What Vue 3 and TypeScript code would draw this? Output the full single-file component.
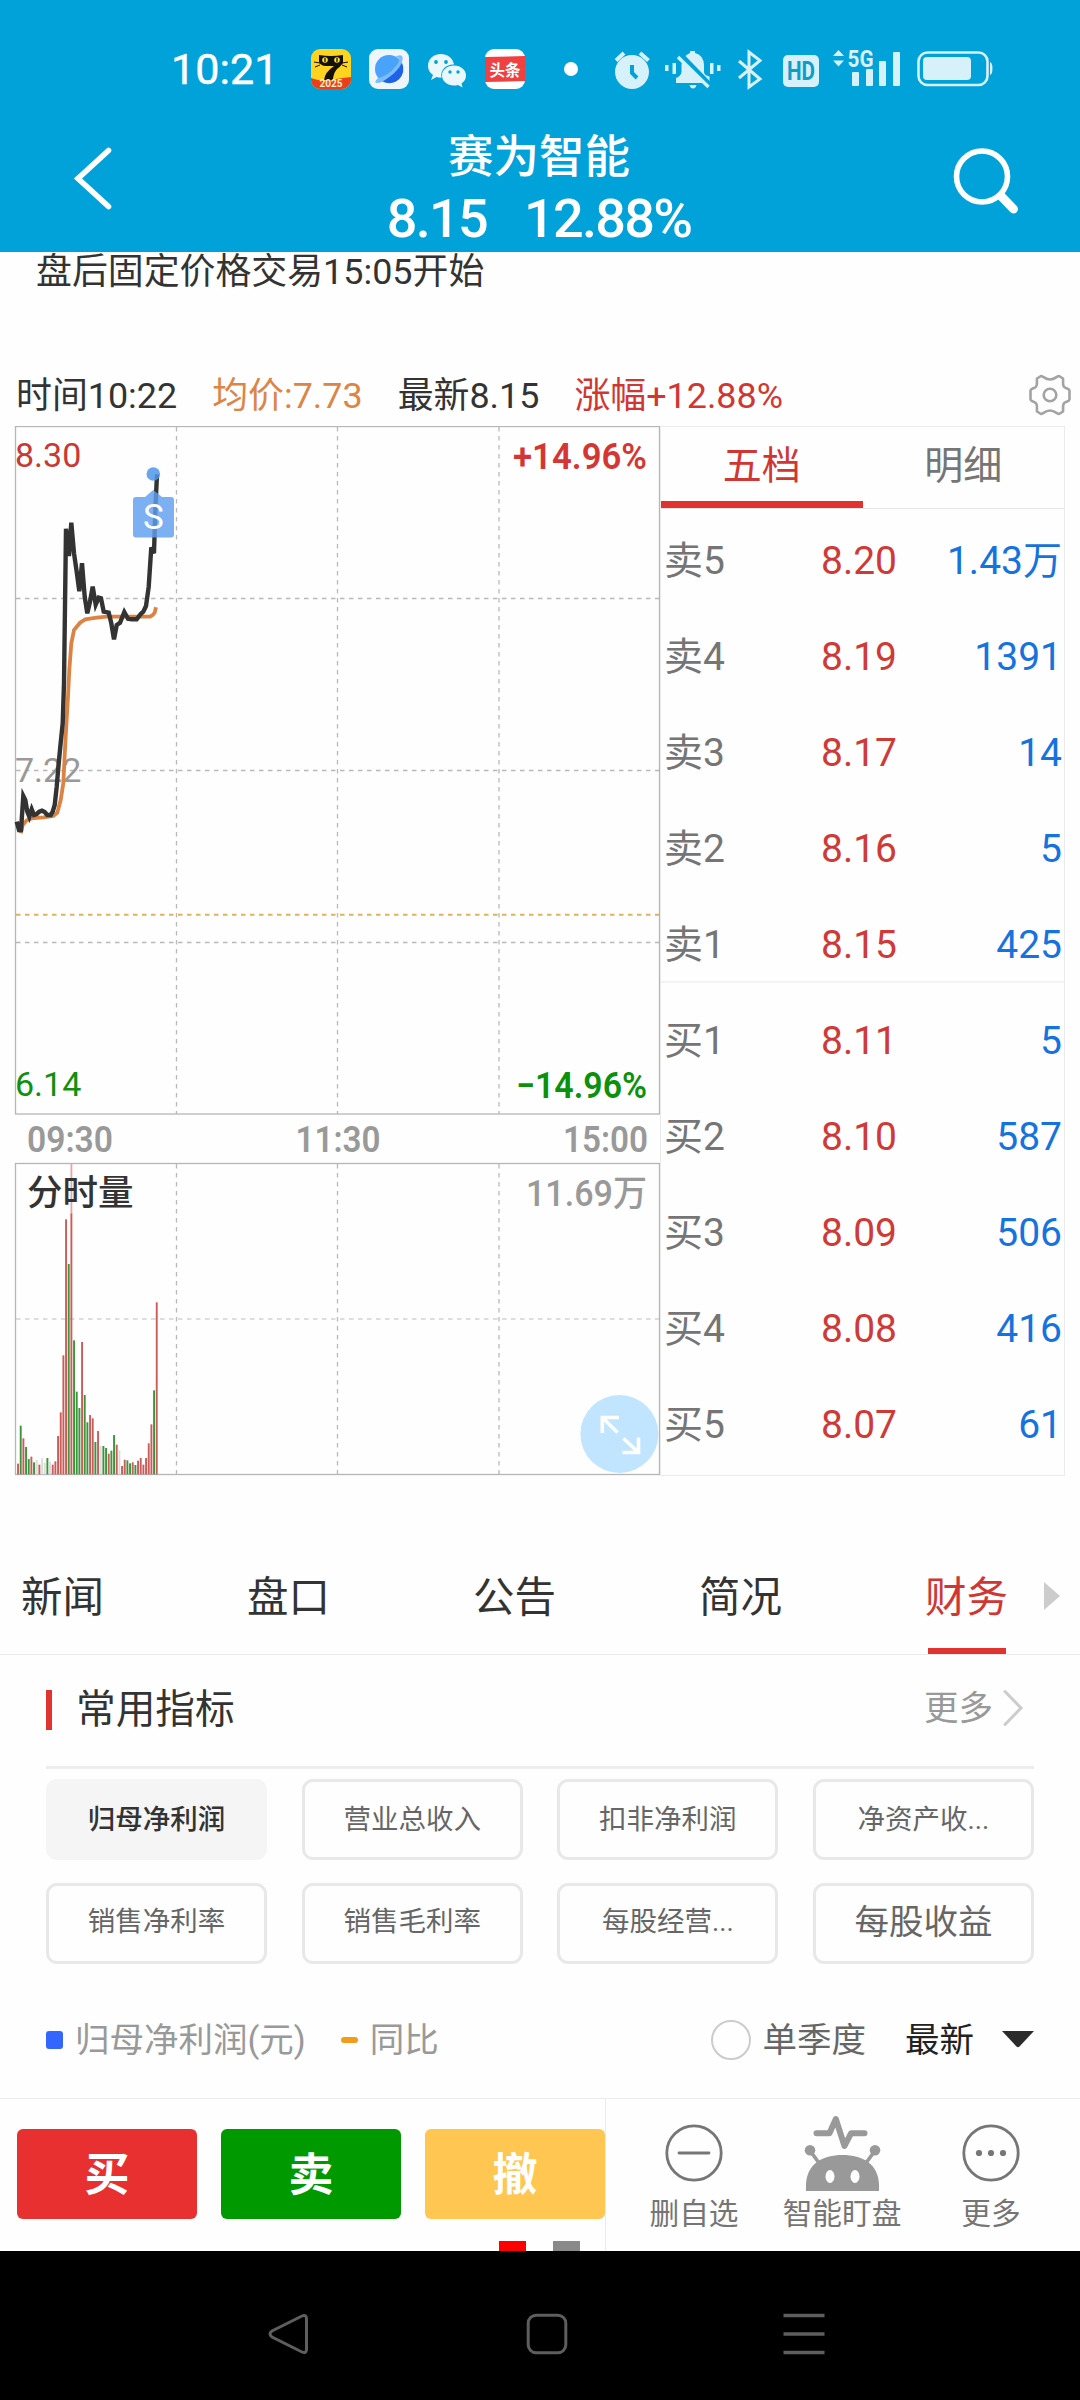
<script setup lang="ts">
type Level = { label: string; price: string; volume: string }
type Tone = 'r' | 'g' | 'n'

const sells: Level[] = [
  { label: '卖5', price: '8.20', volume: '1.43万' },
  { label: '卖4', price: '8.19', volume: '1391' },
  { label: '卖3', price: '8.17', volume: '14' },
  { label: '卖2', price: '8.16', volume: '5' },
  { label: '卖1', price: '8.15', volume: '425' },
]
const buys: Level[] = [
  { label: '买1', price: '8.11', volume: '5' },
  { label: '买2', price: '8.10', volume: '587' },
  { label: '买3', price: '8.09', volume: '506' },
  { label: '买4', price: '8.08', volume: '416' },
  { label: '买5', price: '8.07', volume: '61' },
]

const tabs: string[] = ['新闻', '盘口', '公告', '简况', '财务']
const activeTab = '财务'

const chips: { text: string; kind?: string }[] = [
  { text: '归母净利润', kind: 'on' },
  { text: '营业总收入' },
  { text: '扣非净利润' },
  { text: '净资产收...' },
  { text: '销售净利率' },
  { text: '销售毛利率' },
  { text: '每股经营...' },
  { text: '每股收益', kind: 'big' },
]

// Series below are in thirds of a pixel.
const scale = (pts: number[][]): string =>
  pts.map(([x, y]) => `${(x / 3).toFixed(1)},${(350 + y / 3).toFixed(1)}`).join(' ')

const priceLine = scale([
  [50, 1415], [57, 1440], [63, 1440], [70, 1338], [76, 1350], [82, 1385], [88, 1400], [95, 1378],
  [102, 1395], [110, 1392], [118, 1385], [126, 1382], [134, 1386], [142, 1395], [152, 1395],
  [158, 1385], [164, 1365], [170, 1310], [176, 1240], [181, 1190], [188, 1120], [192, 1000],
  [198, 536], [207, 618], [214, 518], [222, 610], [230, 665], [238, 724], [246, 640], [254, 740],
  [262, 790], [270, 755], [278, 710], [287, 764], [296, 743], [303, 745], [311, 785], [326, 788],
  [334, 820], [342, 868], [350, 825], [360, 818], [373, 786], [384, 806], [395, 808], [410, 808],
  [422, 792], [430, 785], [438, 768], [446, 710], [454, 592], [462, 610], [466, 480], [471, 373],
])
const averageLine = scale([
  [62, 1450], [68, 1425], [80, 1411], [100, 1404], [130, 1402], [160, 1398], [172, 1388],
  [182, 1350], [190, 1300], [196, 1180], [204, 1040], [208, 960], [214, 880], [222, 840],
  [240, 818], [256, 808], [290, 803], [320, 800], [450, 800], [458, 795], [464, 788], [468, 772],
])

const volumeTops: [number, Tone][] = [
  [1271, 'r'], [1157, 'g'], [1195, 'r'], [1221, 'g'], [1257, 'g'], [1250, 'r'], [1267, 'g'],
  [1260, 'n'], [1274, 'r'], [1255, 'n'], [1268, 'n'], [1254, 'g'], [1265, 'n'], [1274, 'r'],
  [1264, 'r'], [1188, 'r'], [1117, 'r'], [946, 'r'], [538, 'r'], [672, 'g'], [520, 'r'],
  [901, 'g'], [1055, 'g'], [1104, 'g'], [906, 'r'], [1065, 'g'], [1147, 'g'], [1125, 'r'],
  [1135, 'r'], [1206, 'g'], [1173, 'r'], [1218, 'n'], [1218, 'g'], [1224, 'g'], [1241, 'r'],
  [1232, 'g'], [1185, 'g'], [1214, 'r'], [1231, 'n'], [1278, 'r'], [1259, 'r'], [1261, 'g'],
  [1270, 'g'], [1267, 'r'], [1275, 'g'], [1262, 'r'], [1254, 'r'], [1274, 'r'], [1254, 'r'],
  [1210, 'r'], [1153, 'r'], [1051, 'g'], [787, 'r'],
]
const fills: Record<Tone, string> = { r: '#cc5c5a', g: '#3a953c', n: '#dcdcdc' }
const bars = volumeTops.map(([top, tone], i) => ({
  x: 17.1 + i * 2.667,
  y: 1040 + top / 3,
  h: (1303 - top) / 3,
  fill: fills[tone],
}))
</script>

<template>
  <div class="screen">
    <header class="head">
      <div class="status">
        <span class="clock">10:21</span>
        <svg width="40" height="40" viewBox="0 0 40 40">
          <rect width="40" height="40" rx="9" fill="#ffd31f" />
          <path d="M0 29 Q10 33 20 31 T40 28 V31 a9 9 0 0 1 -9 9 H9 a9 9 0 0 1 -9 -9Z" fill="#e8401d" />
          <path d="M8 6 Q20 8 32 6 V14 Q29 18 26 20 Q22 25 22 31 H13 Q14 23 23 17 H14 Q9 16 8 13Z" fill="#15110a" />
          <circle cx="14" cy="11" r="2.8" fill="#ffe23d" /><circle cx="26" cy="11" r="2.8" fill="#ffe23d" />
          <path d="M14 9v4M26 9v4" stroke="#15110a" stroke-width="1.3" />
          <path d="M3 13l6 1M4 18l5-2M37 13l-6 1M36 18l-5-2" stroke="#15110a" stroke-width="1" />
          <text x="20" y="37.500" font-size="10" font-weight="700" text-anchor="middle" fill="#fff0c8">2025</text>
        </svg>
        <svg class="g18" width="40" height="40" viewBox="0 0 40 40">
          <rect width="40" height="40" rx="9" fill="#eff5fb" />
          <circle cx="20" cy="20" r="14" fill="#4aa3fa" />
          <path d="M33 14 A14 14 0 0 1 13 32 Q28 25 33 14Z" fill="#1f62e8" />
          <path d="M9 29 Q4 34 8 34 Q14 34 25 24 Q36 12 33 7 Q31 5 26 8 Q34 8 27 17 Q19 27 9 29Z" fill="#79bdfb" />
        </svg>
        <svg class="g17" width="42" height="40" viewBox="0 0 42 40">
          <path d="M15 5 C7 5 2 10 2 17 c0 4 2 7 5 9 l-2 5 5.500-3 q2 .8 5 .8 C14 20 21 15 28 15.500 C27 9 21 5 15 5Z" fill="#e9f8fd" />
          <path d="M28 16.500 c-7 0-12 4.500-12 10 s5 10 12 10 q2 0 4-.6 l4.500 2.500 -1-4 c3-2 4.500-5 4.500-8 c0-5.500-5-10-12-10Z" fill="#e9f8fd" />
          <g fill="#01a1da"><circle cx="10" cy="13" r="1.900" /><circle cx="20" cy="13" r="1.900" /><circle cx="24" cy="23" r="1.700" /><circle cx="32" cy="23" r="1.700" /></g>
        </svg>
        <svg class="g17" width="40" height="40" viewBox="0 0 40 40">
          <rect width="40" height="40" rx="9" fill="#fff" />
          <path d="M0 8 L40 7 V32 L0 33Z" fill="#f04142" />
          <text x="20" y="26.500" font-size="15.500" font-weight="700" text-anchor="middle" fill="#fff">头条</text>
        </svg>
        <svg class="g39" width="14" height="14" viewBox="0 0 14 14"><circle cx="7" cy="7" r="7" fill="#fff" /></svg>
        <svg class="system" width="384" height="60" viewBox="612 39 384 60" fill="#d6f1fa">
          <circle cx="632" cy="72" r="17" />
          <path d="M616 60.500 L624 53 M640 53 L648.500 60.500" stroke="#d6f1fa" stroke-width="4" />
          <path d="M632 65 V73 L637 78" fill="none" stroke="#01a1da" stroke-width="4" />
          <path d="M690 51 h5 v2 q8.500 2 9 12 v7 q0 3 5.500 4.500 V83 H676 v-5 q5-2 5.500-6 v-7 q.5-9 8.500-12Z" />
          <path d="M689.500 85 h7 q-1 3.500-3.500 3.500 t-3.500-3.500Z" />
          <path d="M681 55 L712 87" stroke="#01a1da" stroke-width="5" />
          <path d="M678 57 L708.500 87" stroke="#d6f1fa" stroke-width="3.400" />
          <rect x="665" y="65" width="3.500" height="6" /><rect x="672.500" y="63" width="3.500" height="11" />
          <rect x="710" y="63" width="3.500" height="11" /><rect x="717" y="65" width="3.500" height="6" />
          <path d="M739 61 L760 79 L749 87 V52 L760 60.500 L739 78" fill="none" stroke="#d6f1fa" stroke-width="3" />
          <rect x="783" y="55" width="36" height="32" rx="5" />
          <text x="801" y="80" font-size="25" font-weight="700" text-anchor="middle" textLength="28" lengthAdjust="spacingAndGlyphs" fill="#0e9dc9">HD</text>
          <path d="M833 56 L838.500 50 L844 56Z M833 60.500 H844 L838.500 66.500Z" />
          <text x="847.500" y="66.500" font-size="24" font-weight="700" textLength="26" lengthAdjust="spacingAndGlyphs">5G</text>
          <rect x="852" y="72" width="7" height="14" rx="1" /><rect x="866" y="69" width="7" height="17" rx="1" />
          <rect x="879" y="61" width="7" height="25" rx="1" /><rect x="893" y="52" width="7" height="34" rx="1" />
          <rect x="918.500" y="52.500" width="69" height="32.500" rx="9" fill="none" stroke="#d6f1fa" stroke-width="2.600" />
          <rect x="923" y="57" width="48" height="23" rx="4" />
          <path d="M990 62 q2.500 1 2.500 6.500 t-2.500 6.500Z" />
        </svg>
      </div>
      <div class="titlebar">
        <svg class="back" width="42" height="70" viewBox="72 143 42 70"><path d="M108.500 150.500 L78 178.500 L108.500 206.500" fill="none" stroke="#fff" stroke-width="5.600" stroke-linecap="round" /></svg>
        <div class="titles">
          <h1>赛为智能</h1>
          <p><span>8.15</span><span>12.88%</span></p>
        </div>
        <svg class="find" width="74" height="74" viewBox="950 144 74 74" fill="none" stroke="#fff" stroke-linecap="round">
          <circle cx="982" cy="176.500" r="25.500" stroke-width="5.600" />
          <path d="M1001 196 L1013.500 209" stroke-width="9" />
        </svg>
      </div>
    </header>

    <p class="notice">盘后固定价格交易15:05开始</p>

    <div class="summary">
      <span>时间10:22</span>
      <span class="avg">均价:7.73</span>
      <span>最新8.15</span>
      <span class="up">涨幅+12.88%</span>
      <svg width="46" height="46" viewBox="-23 -23 46 46" fill="none" stroke="#a3a3a3" stroke-width="2.600" stroke-linejoin="round">
        <path d="M-9 -19 C-7 -19 -5 -15.500 0 -15.500 S7 -19 9 -19 L13 -16.500 C13.500 -14 12 -9.500 14.500 -7.800 S19 -6.500 19.500 -4.500 V4.500 C19 6.500 17 6 14.500 7.800 S13.500 14 13 16.500 L9 19 C7 19 5 15.500 0 15.500 S-7 19 -9 19 L-13 16.500 C-13.500 14 -12 9.500 -14.500 7.800 S-19 6.500 -19.500 4.500 V-4.500 C-19 -6.500 -17 -6 -14.500 -7.800 S-13.500 -14 -13 -16.500Z" />
        <circle r="6.300" />
      </svg>
    </div>

    <section class="market">
      <svg class="chart" width="660" height="1050" viewBox="0 426 660 1050">
        <g fill="none" stroke="#b9b9b9" stroke-width="1.300" stroke-dasharray="4.500 4.500">
          <path d="M176.500 427V1114M337.500 427V1114M499 427V1114" />
          <path d="M16 598.500H659M16 770.500H659M16 942.500H659" />
          <path d="M176.500 1164V1474M337.500 1164V1474M499 1164V1474" />
          <path d="M16 1319H659" stroke="#d2d2d2" stroke-width="1.600" />
          <path d="M16 914.700H659" stroke="#dfb25c" stroke-width="2" />
        </g>
        <g fill="none" stroke="#b6b6b6" stroke-width="1.300">
          <rect x="15.500" y="426.500" width="644" height="687.500" />
          <rect x="15.500" y="1163.500" width="644" height="311" />
        </g>
        <g font-size="34">
          <text x="15" y="467" fill="#c93835">8.30</text>
          <text x="15" y="782" fill="#999">7.22</text>
          <text x="15" y="1096" fill="#109010">6.14</text>
        </g>
        <g font-size="36" font-weight="600" text-anchor="end">
          <text x="647" y="469" fill="#d53634" textLength="134" lengthAdjust="spacingAndGlyphs">+14.96%</text>
          <text x="647" y="1098" fill="#0b910b" textLength="131" lengthAdjust="spacingAndGlyphs">−14.96%</text>
        </g>
        <g font-size="36" font-weight="600" fill="#999">
          <text x="27" y="1152" textLength="86" lengthAdjust="spacingAndGlyphs">09:30</text>
          <text x="338" y="1152" text-anchor="middle" textLength="85" lengthAdjust="spacingAndGlyphs">11:30</text>
          <text x="648" y="1152" text-anchor="end" textLength="85" lengthAdjust="spacingAndGlyphs">15:00</text>
          <text x="647" y="1206" text-anchor="end" font-weight="500" textLength="121" lengthAdjust="spacingAndGlyphs">11.69万</text>
        </g>
        <polyline :points="averageLine" fill="none" stroke="#dc8343" stroke-width="3.800" />
        <polyline :points="priceLine" fill="none" stroke="#333" stroke-width="4.400" />
        <circle cx="153.300" cy="474" r="6.800" fill="#4f97ea" fill-opacity=".85" />
        <path d="M136 497 H145 L153.300 490 L162 497 H171 a3 3 0 0 1 3 3 V534.500 a3 3 0 0 1 -3 3 H136 a3 3 0 0 1 -3 -3 V500 a3 3 0 0 1 3 -3Z" fill="#609df0" fill-opacity=".82" />
        <text x="153.500" y="529" font-size="35" text-anchor="middle" fill="#fff">S</text>
        <rect x="70.500" y="1163.500" width="1.800" height="50" fill="#eaa5a3" />
        <rect v-for="(b, i) in bars" :key="i" :x="b.x" :y="b.y" width="1.900" :height="b.h" :fill="b.fill" />
        <text x="27" y="1205" font-size="35.500" font-weight="500" fill="#333">分时量</text>
        <circle cx="619.400" cy="1434" r="39" fill="#c1e5ff" />
        <g fill="none" stroke="#fff" stroke-width="3.600">
          <path d="M619 1417.500H602.300V1433M602.300 1417.500L617.500 1432.500" />
          <path d="M622.500 1452.500H638.500V1437.500M638.500 1452.500L623.500 1438.500" />
        </g>
      </svg>

      <div class="book">
        <div class="booktabs"><span class="on">五档</span><span>明细</span></div>
        <ul class="sell">
          <li v-for="l in sells" :key="l.label"><span>{{ l.label }}</span><b>{{ l.price }}</b><i>{{ l.volume }}</i></li>
        </ul>
        <ul>
          <li v-for="l in buys" :key="l.label"><span>{{ l.label }}</span><b>{{ l.price }}</b><i>{{ l.volume }}</i></li>
        </ul>
      </div>
    </section>

    <nav class="tabs">
      <span v-for="t in tabs" :key="t" :class="{ on: t === activeTab }">{{ t }}</span>
      <svg width="16" height="28" viewBox="0 0 16 28"><path d="M0 0L16 14L0 28Z" fill="#ccc" /></svg>
    </nav>

    <div class="sectionhead">
      <h2>常用指标</h2>
      <span>更多</span>
      <svg width="22" height="38" viewBox="0 0 22 38"><path d="M3 2.500L19 19L3 35.500" fill="none" stroke="#ccc" stroke-width="3" stroke-linecap="round" /></svg>
    </div>

    <div class="chips">
      <span v-for="c in chips" :key="c.text" :class="c.kind">{{ c.text }}</span>
    </div>

    <div class="legend">
      <i class="sq"></i><span>归母净利润(元)</span>
      <i class="dash"></i><span>同比</span>
      <i class="radio"></i><span class="mid">单季度</span>
      <span class="dark">最新</span>
      <svg width="32" height="17" viewBox="0 0 32 17"><path d="M0 0H32L17.500 15.500Q16 17 14.500 15.500Z" fill="#2b2b2b" /></svg>
    </div>

    <footer class="actions">
      <div class="trade">
        <button class="buy">买</button><button class="sellbtn">卖</button><button class="cancel">撤</button>
        <i class="page red"></i><i class="page gray"></i>
      </div>
      <div class="tool t1">
        <svg width="80" height="80" viewBox="-40 -40 80 80" fill="none" stroke="#767676" stroke-width="2.800" stroke-linecap="round"><circle r="27.200" /><path d="M-15 0H15" /></svg>
        <span>删自选</span>
      </div>
      <div class="tool t2">
        <svg width="80" height="80" viewBox="802 2113 80 80" fill="#999">
          <path d="M806 2191 V2184 C807 2164 822 2155 842.500 2155 S878 2164 879 2184 V2191Z" />
          <circle cx="810" cy="2150.300" r="5.300" /><circle cx="875" cy="2150.300" r="5.300" />
          <path d="M811 2152L819 2163M874 2152L866 2163" stroke="#999" stroke-width="3.600" />
          <ellipse cx="830" cy="2176.500" rx="4.500" ry="6.500" fill="#fff" /><ellipse cx="855" cy="2176.500" rx="4.500" ry="6.500" fill="#fff" />
          <path d="M816.500 2133.300H829.500L835.800 2119L844.500 2146L851 2133.300H864.500" fill="none" stroke="#999" stroke-width="6" stroke-linecap="round" stroke-linejoin="round" />
        </svg>
        <span>智能盯盘</span>
      </div>
      <div class="tool t3">
        <svg width="80" height="80" viewBox="-40 -40 80 80"><circle r="27.200" fill="none" stroke="#767676" stroke-width="2.800" /><g fill="#767676"><circle cx="-12" r="3.100" /><circle r="3.100" /><circle cx="12" r="3.100" /></g></svg>
        <span>更多</span>
      </div>
    </footer>

    <div class="sysnav">
      <svg width="44" height="44" viewBox="-22 -22 44 44" fill="none" stroke="#5e5e5e" stroke-width="3"><path d="M13 -18 Q17.500 -20 17.500 -15 V15 Q17.500 20 13 18 L-17 3 Q-21 0 -17 -3Z" /></svg>
      <svg width="44" height="44" viewBox="-22 -22 44 44" fill="none" stroke="#5e5e5e" stroke-width="3"><rect x="-18.800" y="-18.800" width="37.600" height="37.600" rx="8" /></svg>
      <svg width="44" height="44" viewBox="-22 -22 44 44" fill="none" stroke="#5e5e5e" stroke-width="3.400"><path d="M-20.500 -18.500H20.500M-20.500 0H20.500M-20.500 18.500H20.500" /></svg>
    </div>
  </div>
</template>

<style>
body { background: #fff; }
</style>

<style scoped>
* { box-sizing: border-box; }
.screen {
  width: 1080px; height: 2400px; overflow: hidden; background: #fefefe; color: #333;
  display: flex; flex-direction: column;
  font-family: Roboto, "Noto Sans CJK SC", sans-serif;
}
svg { display: block; flex: none; }
h1, h2, p, ul { margin: 0; padding: 0; font-weight: 400; }
i, b { font-style: normal; font-weight: 400; }
.head { height: 252px; background: #01a1da; color: #fff; flex: none; }
.status { height: 126px; padding: 12px 0 0 171px; display: flex; align-items: center; }
.clock { width: 140px; font-size: 43px; line-height: 50px; letter-spacing: .1px; -webkit-text-stroke: .5px #fff; }
.g18 { margin-left: 18px; }
.g17 { margin-left: 17px; }
.g39 { margin-left: 39px; }
.system { margin-left: 34px; }
.titlebar { height: 126px; display: flex; align-items: flex-start; }
.back { margin: 17px 0 0 72px; }
.titles { width: 600px; margin-left: 125px; text-align: center; white-space: nowrap; }
h1 { font-size: 45.500px; line-height: 60px; font-weight: 500; margin-top: 2px; }
.titles p { font-size: 54px; line-height: 62px; font-weight: 500; letter-spacing: -1.700px; display: flex; justify-content: center; gap: 37px; }
.find { margin: 18px 0 0 111px; }
.notice { height: 91px; flex: none; padding: 1px 0 0 36px; font-size: 35.900px; line-height: 38px; }
.summary { height: 83px; flex: none; display: flex; align-items: center; padding: 21px 7px 0 16px; font-size: 35.900px; line-height: 40px; white-space: nowrap; }
.summary span { padding-top: 1px; }
.summary span + span { margin-left: 35px; }
.summary svg { margin-left: auto; }
.avg { color: #dc8545; }
.up { color: #d03734; }
.market { height: 1050px; flex: none; display: flex; }
.book { width: 405px; border: 1px solid #ebebeb; font-size: 39px; }
.booktabs { display: flex; height: 82px; border-bottom: 1px solid #e6e6e6; color: #757575; text-align: center; line-height: 79px; }
.booktabs span { width: 202px; height: 81px; }
.booktabs .on { color: #d03734; border-bottom: 7px solid #e23230; }
ul { list-style: none; }
.sell { border-bottom: 2px solid #f3f3f3; }
li { height: 96px; display: flex; line-height: 50px; padding: 33px 2px 0 3px; color: #757575; }
.sell li { padding-top: 35px; }
.sell li:first-child { height: 88px; padding-top: 27px; }
li span { width: 157px; }
li b { width: 110px; color: #cf3a37; }
li i { flex: 1; text-align: right; color: #1673de; }
.tabs { height: 179px; flex: none; border-bottom: 1px solid #ebebeb; display: flex; padding: 84px 0 0 21px; font-size: 41.500px; line-height: 75px; }
.tabs span { width: 83px; margin-right: 143px; height: 94px; white-space: nowrap; }
.tabs .on { color: #d03734; margin-right: 36px; background: linear-gradient(#e03431, #e03431) 3px 88px / 78px 6px no-repeat; }
.tabs svg { margin-top: 22px; }
.sectionhead { height: 114px; flex: none; margin: 0 46px; padding-bottom: 2px; border-bottom: 3px solid #eee; display: flex; align-items: center; }
h2 { flex: 1; font-size: 39.700px; line-height: 40px; border-left: 6px solid #e03431; padding-left: 24px; }
.sectionhead span { font-size: 34.500px; line-height: 40px; color: #999; margin: -3px 9px 0 0; }
.sectionhead svg { margin: -3px 10px 0 0; }
.chips { flex: none; margin: 10px 46px 0; display: grid; grid-template-columns: repeat(4, 221px); justify-content: space-between; row-gap: 23px; }
.chips span { height: 81px; border: 3px solid #e8e8e8; border-radius: 11px; text-align: center; font-size: 27.500px; line-height: 75px; color: #666; }
.chips span:nth-child(n+5) { line-height: 72px; }
.chips .on { background: #f5f5f5; border-color: #f5f5f5; color: #333; font-weight: 500; }
.chips .big { font-size: 34.500px; }
.legend { height: 134px; flex: none; display: flex; align-items: center; padding: 17px 46px 0; font-size: 34.500px; line-height: 40px; color: #999; white-space: nowrap; }
.sq { width: 17px; height: 18px; border-radius: 3px; background: #3366ff; margin-right: 12px; }
.dash { width: 17px; height: 6px; border-radius: 3px; background: #f39c1b; margin: 0 12px 0 35px; }
.radio { width: 40px; height: 40px; border: 2px solid #ccc; border-radius: 50%; margin: 0 12px 0 auto; }
.mid { color: #666; }
.dark { color: #222; margin: 0 28px 0 39px; }
.actions { height: 153px; flex: none; border-top: 1px solid #ececec; display: flex; position: relative; }
.trade { width: 606px; border-right: 1px solid #ebebeb; padding: 30px 0 0 17px; display: flex; gap: 24px; }
button { width: 180px; height: 90px; border: 0; border-radius: 6px; padding: 4px 0 0; color: #fff; font: 700 45px/86px Roboto, "Noto Sans CJK SC", sans-serif; flex: none; }
.buy { background: #e83030; }
.sellbtn { background: #009900; }
.cancel { background: #ffc652; }
.page { position: absolute; bottom: 0; width: 27px; height: 10px; }
.red { left: 499px; background: #f00; }
.gray { left: 553px; background: #8a8a8a; }
.tool { display: flex; flex-direction: column; align-items: center; width: 130px; padding-top: 14px; font-size: 29.700px; line-height: 36px; color: #757575; white-space: nowrap; }
.tool span { margin-top: 3px; }
.t1 { margin-left: 23px; }
.t2 { margin-left: 18px; }
.t3 { margin-left: 19px; }
.sysnav { height: 149px; flex: none; background: #000; display: flex; padding: 61px 0 0 267px; gap: 213.500px; }
</style>
